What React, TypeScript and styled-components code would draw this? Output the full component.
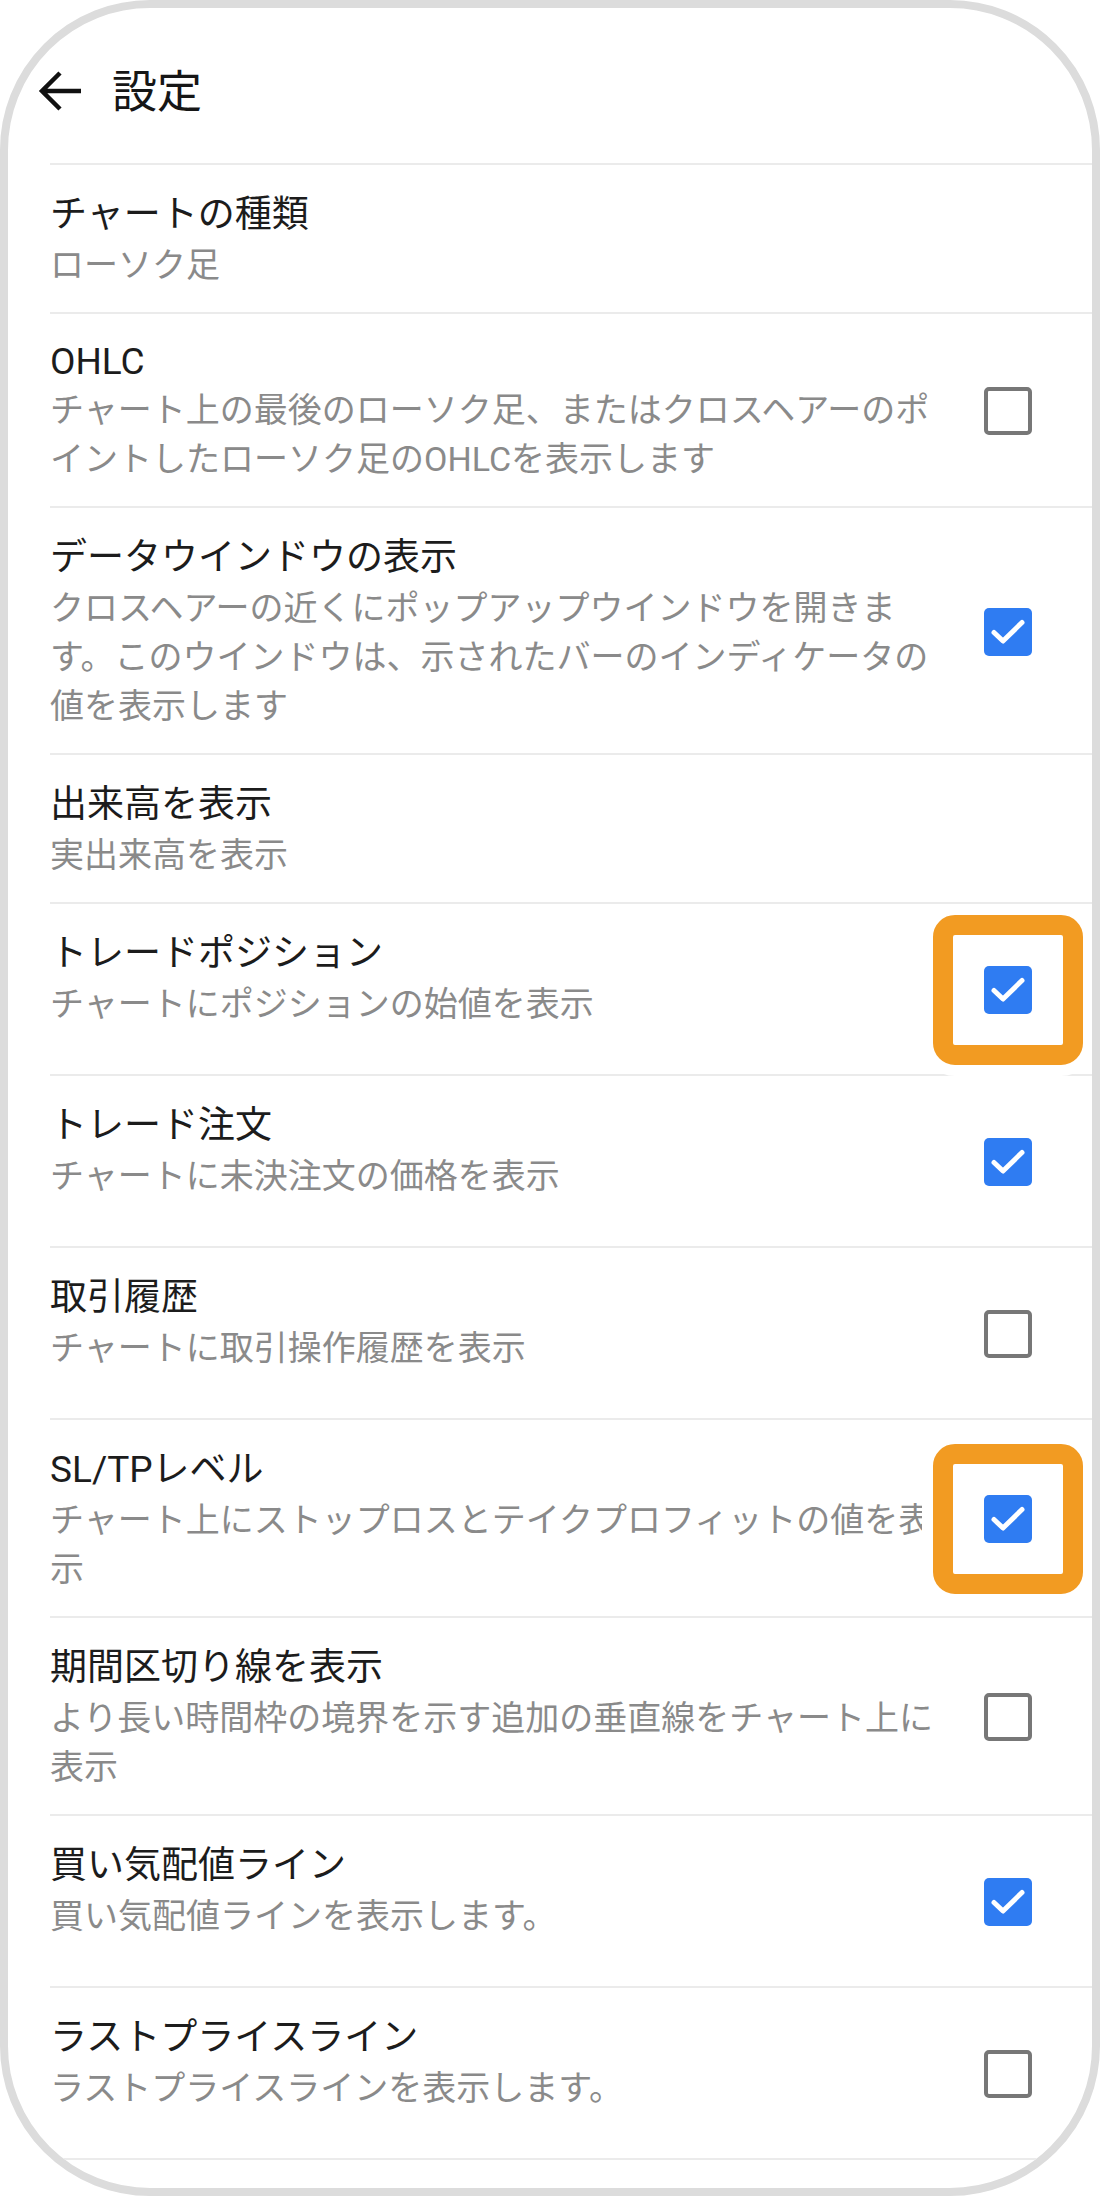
import React from 'react';
import styled, { createGlobalStyle } from 'styled-components';

const GlobalStyle = createGlobalStyle`
  html, body {
    margin: 0;
    padding: 0;
    background: #ffffff;
  }
  body {
    font-family: Roboto, "Noto Sans CJK JP", "Noto Sans", sans-serif;
  }
`;

const Frame = styled.div`
  box-sizing: border-box;
  width: 1100px;
  height: 2196px;
  border: 8px solid #dcdcdc;
  border-radius: 150px;
  overflow: hidden;
  background: #ffffff;
`;

const Header = styled.header`
  box-sizing: border-box;
  height: 155px;
  display: flex;
  align-items: center;
  gap: 28px;
  padding: 14px 0 0 30px;
`;

const BackButton = styled.button`
  display: flex;
  align-items: center;
  justify-content: center;
  width: 46px;
  height: 46px;
  padding: 0;
  margin-top: -4px;
  border: none;
  background: transparent;
  color: #111111;
`;

const Title = styled.h1`
  margin: 0;
  font-size: 45px;
  font-weight: 400;
  line-height: 1;
  color: #161616;
`;

const List = styled.div`
  margin-left: 42px;
  border-top: 2px solid #ebebeb;
`;

const Row = styled.div<{ $hasCheck: boolean }>`
  position: relative;
  box-sizing: border-box;
  display: grid;
  grid-template-columns: 1fr ${(p) => (p.$hasCheck ? '48px' : '0px')};
  column-gap: 38px;
  align-items: center;
  min-height: ${(p) => (p.$hasCheck ? '172px' : '0')};
  padding: 24px 60px 22px 0;
  border-bottom: 2px solid #ebebeb;
`;

const TextBlock = styled.div`
  align-self: start;
  min-width: 0;
`;

const ItemTitle = styled.div<{ $latin: boolean }>`
  font-size: 37px;
  line-height: ${(p) => (p.$latin ? '48px' : '52px')};
  color: #1c1c1c;
`;

const ItemSub = styled.div`
  font-size: 34px;
  line-height: 49px;
  color: #8a8a8a;
`;

const CheckWrap = styled.div`
  position: relative;
  width: 48px;
  height: 48px;
`;

const Box = styled.div<{ $checked: boolean }>`
  box-sizing: border-box;
  width: 48px;
  height: 48px;
  border-radius: 5px;
  display: flex;
  align-items: center;
  justify-content: center;
  background: ${(p) => (p.$checked ? '#2f7cf2' : '#ffffff')};
  border: ${(p) => (p.$checked ? 'none' : '4px solid #777777')};
`;

const Highlight = styled.div`
  position: absolute;
  box-sizing: border-box;
  left: 50%;
  top: 50%;
  width: 150px;
  height: 150px;
  transform: translate(-50%, -50%);
  border: 20px solid #f29b22;
  border-radius: 22px;
  box-shadow: 0 0 0 11px #ffffff;
  pointer-events: none;
`;

type Item = {
  title: string;
  sub: string;
  check?: 'on' | 'off';
  highlight?: boolean;
};

const items: Item[] = [
  { title: 'チャートの種類', sub: 'ローソク足' },
  {
    title: 'OHLC',
    sub: 'チャート上の最後のローソク足、またはクロスヘアーのポイントしたローソク足のOHLCを表示します',
    check: 'off',
  },
  {
    title: 'データウインドウの表示',
    sub: 'クロスヘアーの近くにポップアップウインドウを開きます。このウインドウは、示されたバーのインディケータの値を表示します',
    check: 'on',
  },
  { title: '出来高を表示', sub: '実出来高を表示' },
  {
    title: 'トレードポジション',
    sub: 'チャートにポジションの始値を表示',
    check: 'on',
    highlight: true,
  },
  { title: 'トレード注文', sub: 'チャートに未決注文の価格を表示', check: 'on' },
  { title: '取引履歴', sub: 'チャートに取引操作履歴を表示', check: 'off' },
  {
    title: 'SL/TPレベル',
    sub: 'チャート上にストップロスとテイクプロフィットの値を表示',
    check: 'on',
    highlight: true,
  },
  {
    title: '期間区切り線を表示',
    sub: 'より長い時間枠の境界を示す追加の垂直線をチャート上に表示',
    check: 'off',
  },
  { title: '買い気配値ライン', sub: '買い気配値ラインを表示します。', check: 'on' },
  { title: 'ラストプライスライン', sub: 'ラストプライスラインを表示します。', check: 'off' },
];

const ArrowLeft = () => (
  <svg width="46" height="46" viewBox="0 0 46 46" fill="none">
    <path
      d="M43 23H6M22 5L4 23L22 41"
      stroke="currentColor"
      strokeWidth="4.5"
      strokeLinecap="butt"
      strokeLinejoin="miter"
    />
  </svg>
);

const CheckMark = () => (
  <svg width="48" height="48" viewBox="0 0 48 48" fill="none">
    <path
      d="M10 24.5L19 33L38 14.5"
      stroke="#ffffff"
      strokeWidth="5"
      strokeLinecap="round"
      strokeLinejoin="round"
    />
  </svg>
);

const Checkbox = ({ checked, highlight }: { checked: boolean; highlight?: boolean }) => (
  <CheckWrap>
    {highlight && <Highlight />}
    <Box $checked={checked}>{checked && <CheckMark />}</Box>
  </CheckWrap>
);

const isLatin = (s: string) => /^[\x20-\x7E]+$/.test(s);

export default function App() {
  return (
    <>
      <GlobalStyle />
      <Frame lang="ja">
        <Header>
          <BackButton aria-label="戻る">
            <ArrowLeft />
          </BackButton>
          <Title>設定</Title>
        </Header>
        <List>
          {items.map((it) => (
            <Row key={it.title} $hasCheck={!!it.check}>
              <TextBlock>
                <ItemTitle $latin={isLatin(it.title)}>{it.title}</ItemTitle>
                <ItemSub>{it.sub}</ItemSub>
              </TextBlock>
              {it.check ? <Checkbox checked={it.check === 'on'} highlight={it.highlight} /> : <span />}
            </Row>
          ))}
        </List>
      </Frame>
    </>
  );
}
